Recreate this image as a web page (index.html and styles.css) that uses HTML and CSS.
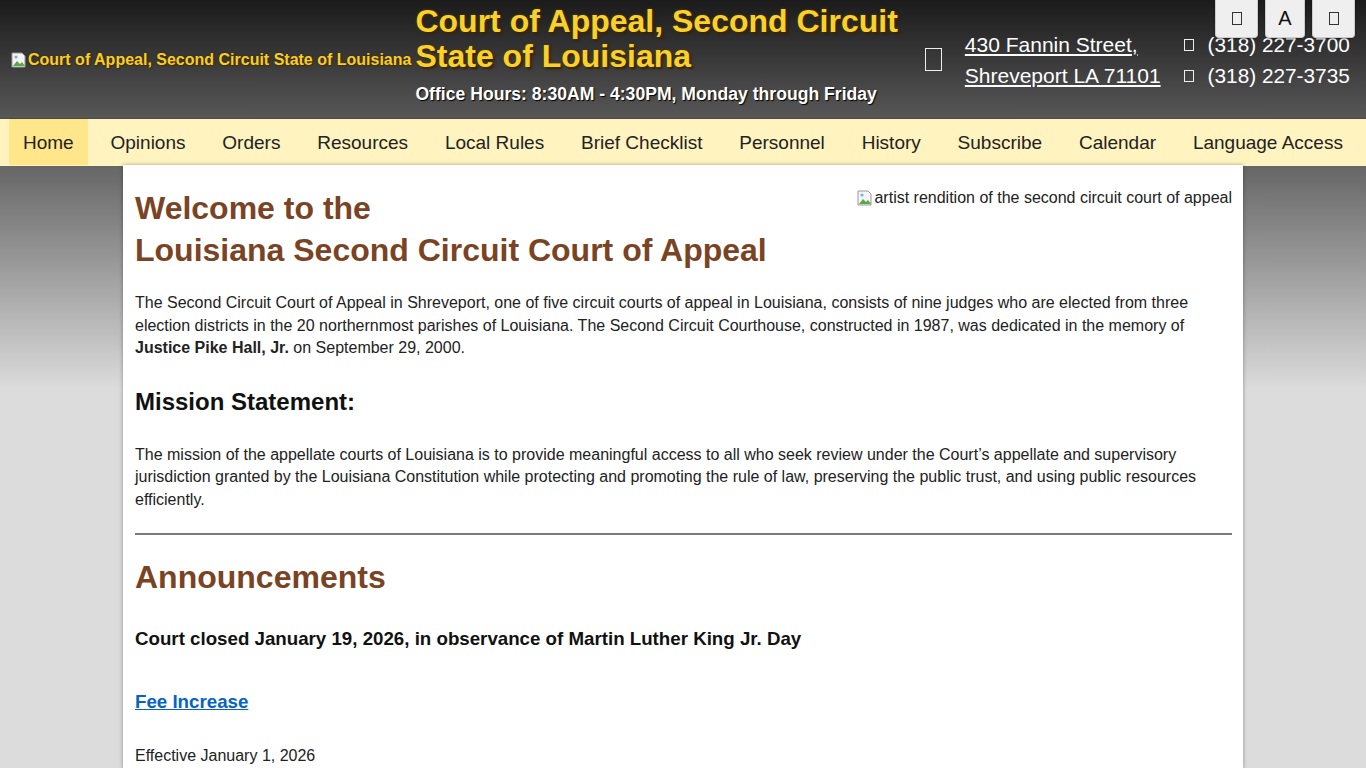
FILE: index.html
```html
<!DOCTYPE html>
<html lang="en">
<head>
<meta charset="utf-8">
<title>Court of Appeal, Second Circuit</title>
<link rel="stylesheet" href="styles.css">
</head>
<body>
<header class="masthead">
  <div class="logo"><svg class="broken" width="16" height="16" viewBox="0 0 16 16"><path d="M1 1h10l3 3v11H1z" fill="#f4f4f4" stroke="#999" stroke-width="1"/><path d="M2 14l4-5 3 3 2-2 3 4z" fill="#5aa845"/><circle cx="5" cy="5" r="1.6" fill="#7ab0e0"/></svg>Court of Appeal, Second Circuit State of Louisiana</div>
  <div class="title-block">
    <h1 class="site-title">Court of Appeal, Second Circuit<br>State of Louisiana</h1>
    <p class="hours">Office Hours: 8:30AM - 4:30PM, Monday through Friday</p>
  </div>
  <div class="address">
    <span class="tofu tofu-big"></span>
    <a href="#" class="addr-link">430 Fannin Street,<br>Shreveport LA 71101</a>
  </div>
  <div class="phones">
    <div class="phone"><span class="tofu"></span>(318) 227-3700</div>
    <div class="phone"><span class="tofu"></span>(318) 227-3735</div>
  </div>
  <div class="access-tools">
    <button class="tool"><span class="tofu tofu-dark"></span></button>
    <button class="tool tool-a">A</button>
    <button class="tool"><span class="tofu tofu-dark"></span></button>
  </div>
</header>
<nav class="mainnav">
  <a href="#" class="nav-item active">Home</a>
  <a href="#" class="nav-item">Opinions</a>
  <a href="#" class="nav-item">Orders</a>
  <a href="#" class="nav-item">Resources</a>
  <a href="#" class="nav-item">Local Rules</a>
  <a href="#" class="nav-item">Brief Checklist</a>
  <a href="#" class="nav-item">Personnel</a>
  <a href="#" class="nav-item">History</a>
  <a href="#" class="nav-item">Subscribe</a>
  <a href="#" class="nav-item">Calendar</a>
  <a href="#" class="nav-item">Language Access</a>
</nav>
<main class="content">
  <div class="hero-img"><svg class="broken" width="16" height="16" viewBox="0 0 16 16"><path d="M1 1h10l3 3v11H1z" fill="#f4f4f4" stroke="#999" stroke-width="1"/><path d="M2 14l4-5 3 3 2-2 3 4z" fill="#5aa845"/><circle cx="5" cy="5" r="1.6" fill="#7ab0e0"/></svg>artist rendition of the second circuit court of appeal</div>
  <h2 class="welcome">Welcome to the<br>Louisiana Second Circuit Court of Appeal</h2>
  <p class="text">The Second Circuit Court of Appeal in Shreveport, one of five circuit courts of appeal in Louisiana, consists of nine judges who are elected from three election districts in the 20 northernmost parishes of Louisiana. The Second Circuit Courthouse, constructed in 1987, was dedicated in the memory of <strong>Justice Pike Hall, Jr.</strong> on September 29, 2000.</p>
  <h3 class="mission">Mission Statement:</h3>
  <p class="text">The mission of the appellate courts of Louisiana is to provide meaningful access to all who seek review under the Court’s appellate and supervisory jurisdiction granted by the Louisiana Constitution while protecting and promoting the rule of law, preserving the public trust, and using public resources efficiently.</p>
  <hr class="rule">
  <h2 class="announce">Announcements</h2>
  <h4 class="notice">Court closed January 19, 2026, in observance of Martin Luther King Jr. Day</h4>
  <h4 class="notice"><a href="#" class="fee">Fee Increase</a></h4>
  <p class="text">Effective January 1, 2026</p>
</main>
</body>
</html>
```

FILE: styles.css
```css
html, body {
  margin: 0;
  padding: 0;
}
body {
  font-family: "Liberation Sans", Arial, sans-serif;
  color: #222;
  background: #dcdcdc linear-gradient(to bottom, #1b1b1b 0px, #575757 118px, #4a4a4a 118px, #4a4a4a 119px, #fff3c0 119px, #fff3c0 166px, #666 166px, #dcdcdc 390px, #dcdcdc 100%) no-repeat;
  min-height: 768px;
}
.masthead {
  height: 118px;
  display: flex;
  align-items: center;
  padding-left: 11px;
  position: relative;
  box-sizing: border-box;
}
.logo {
  display: flex;
  align-items: center;
  font-size: 16px;
  font-weight: bold;
  color: #f5cf2a;
  text-shadow: 1px 1px 1px #4a2a00, 0 0 2px #3a2a00;
  margin-top: 1px;
  white-space: nowrap;
}
.broken {
  flex: none;
  margin-right: 1px;
}
.title-block {
  margin-left: 4px;
  align-self: flex-start;
  padding-top: 4px;
}
.site-title {
  margin: 0;
  font-size: 32px;
  line-height: 35px;
  font-weight: bold;
  color: #f8d22a;
  text-shadow: 2px 2px 2px #3a2400, 0 0 3px #5a3a00;
  white-space: nowrap;
}
.hours {
  margin: 10px 0 0;
  font-size: 17.6px;
  line-height: 20px;
  font-weight: bold;
  color: #fff;
  text-shadow: 1px 1px 1px #000;
  white-space: nowrap;
}
.address {
  display: flex;
  align-items: center;
  margin-left: 27px;
  margin-top: 1px;
}
.tofu {
  display: inline-block;
  width: 10px;
  height: 12px;
  border: 1px solid #eee;
  box-sizing: border-box;
  vertical-align: middle;
}
.tofu-big {
  width: 17px;
  height: 23px;
  margin-right: 23px;
}
.tofu-dark {
  border-color: #333;
}
.addr-link {
  color: #fff;
  font-size: 21px;
  line-height: 31px;
  text-decoration: underline;
  text-underline-offset: 2px;
  white-space: nowrap;
}
.phones {
  margin-left: 23px;
  margin-top: 1px;
}
.phone {
  color: #fff;
  font-size: 20.8px;
  line-height: 31px;
  white-space: nowrap;
  display: flex;
  align-items: center;
}
.phone .tofu {
  margin-right: 14px;
  margin-top: 2px;
}
.access-tools {
  position: absolute;
  top: 0;
  right: 11px;
  display: flex;
  gap: 7px;
}
.tool {
  width: 43px;
  height: 38px;
  background: #efefef;
  border: 1px solid #ccc;
  border-top: none;
  border-radius: 0 0 4px 4px;
  font-family: "Liberation Sans", Arial, sans-serif;
  font-size: 20px;
  color: #111;
  display: flex;
  align-items: center;
  justify-content: center;
  padding: 0;
  box-shadow: 0 1px 2px rgba(0,0,0,.4);
}
.tool-a {
  width: 40px;
}
.tool .tofu {
  width: 10px;
  height: 13px;
}
.mainnav {
  margin-top: 1px;
  height: 46px;
  display: flex;
  justify-content: space-between;
  padding: 0 9px;
  background: #fff3c0;
}
.nav-item {
  display: flex;
  align-items: center;
  padding: 1px 14px 0;
  font-size: 19px;
  color: #222;
  text-decoration: none;
}
.nav-item.active {
  background: #ffe68a;
}
.content {
  width: 1120px;
  margin: 0 auto;
  background: #fff;
  box-sizing: border-box;
  padding: 18px 11px 1px 12px;
  min-height: 602px;
  box-shadow: 0 0 4px rgba(0,0,0,.35);
}
.hero-img {
  float: right;
  display: flex;
  align-items: center;
  font-size: 16px;
  color: #222;
  margin-top: 6px;
}
.welcome, .announce {
  margin: 0;
  font-size: 32px;
  line-height: 42px;
  font-weight: bold;
  color: #7a4424;
}
.welcome {
  padding-top: 4px;
}
.text {
  font-size: 16px;
  line-height: 22.5px;
  margin: 21px 0 0;
  color: #222;
}
.mission {
  font-size: 24px;
  font-weight: bold;
  color: #111;
  margin: 28px 0 0;
  line-height: 28px;
}
.mission + .text {
  margin-top: 28px;
}
.rule {
  border: none;
  border-top: 2px solid #7a7a7a;
  margin: 22px 0 0;
}
.announce {
  margin-top: 21px;
}
.notice {
  font-size: 18.72px;
  font-weight: bold;
  color: #111;
  margin: 29px 0 0;
  line-height: 24px;
}
.notice + .notice {
  margin-top: 39px;
}
.fee {
  color: #0563c1;
  text-decoration: underline;
}
.notice + .text {
  margin-top: 31px;
}
```
